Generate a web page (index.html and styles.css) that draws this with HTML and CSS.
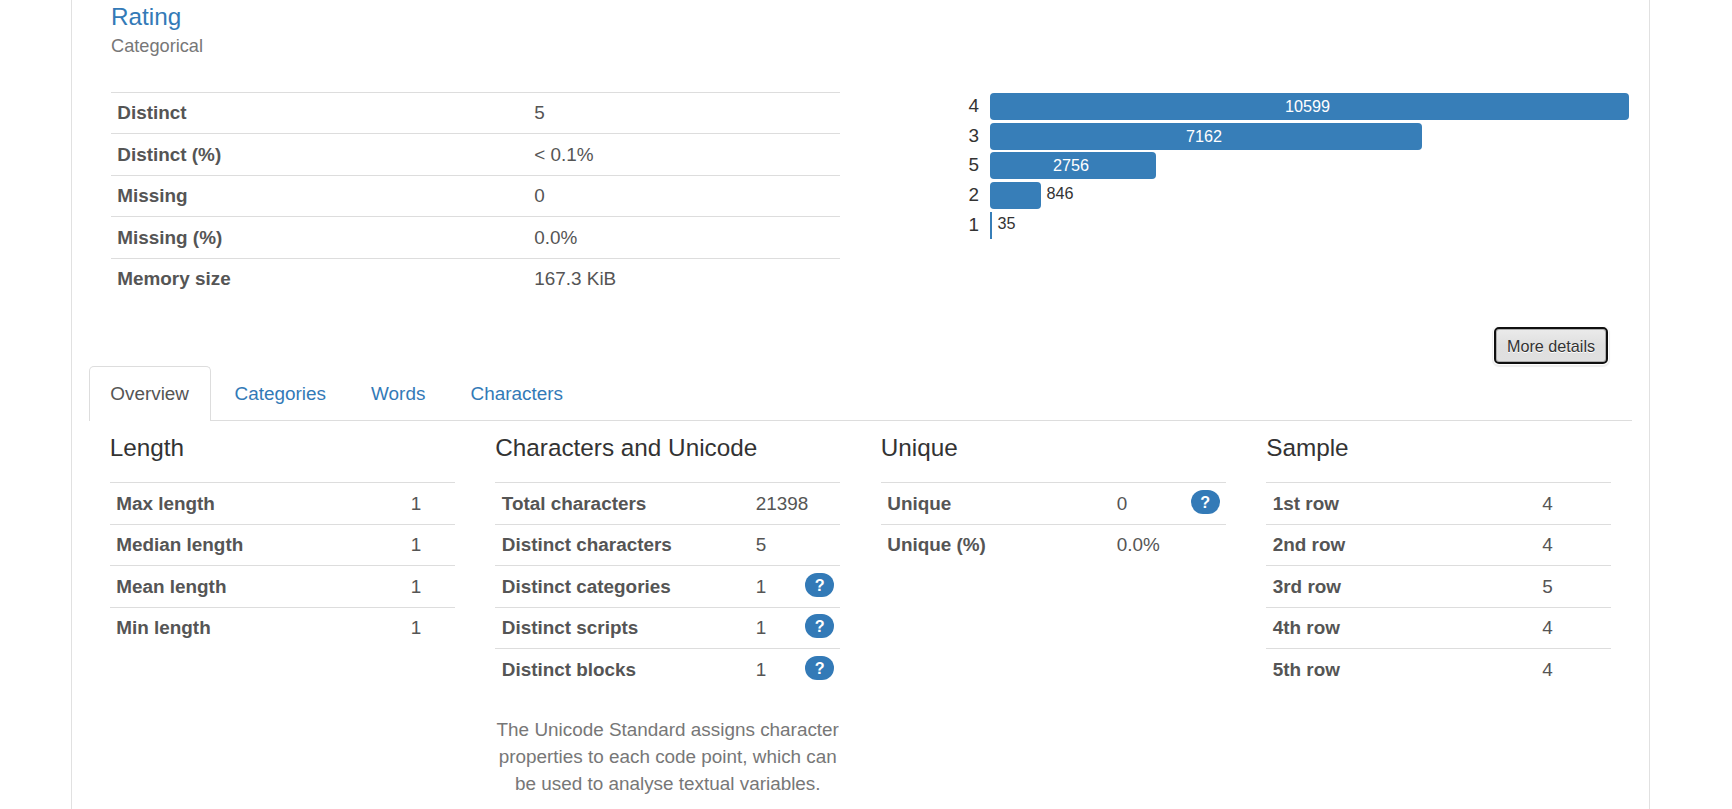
FILE: index.html
```html
<!DOCTYPE html>
<html lang="en">
<head>
<meta charset="utf-8">
<title>Rating</title>
<link rel="stylesheet" href="styles.css">
</head>
<body>
<main class="panel">
  <header class="variable-head">
    <h3 class="variable-name"><a href="#rating">Rating</a></h3>
    <p class="variable-type">Categorical</p>
  </header>

  <section class="summary">
    <dl class="stats stats-summary">
      <div class="row"><dt>Distinct</dt><dd>5</dd></div>
      <div class="row"><dt>Distinct (%)</dt><dd>&lt; 0.1%</dd></div>
      <div class="row"><dt>Missing</dt><dd>0</dd></div>
      <div class="row"><dt>Missing (%)</dt><dd>0.0%</dd></div>
      <div class="row"><dt>Memory size</dt><dd>167.3 KiB</dd></div>
    </dl>
    <div class="chart">
      <div class="bar-row"><span class="bar-label">4</span><div class="bar" style="width:639px">10599</div></div>
      <div class="bar-row"><span class="bar-label">3</span><div class="bar" style="width:432px">7162</div></div>
      <div class="bar-row"><span class="bar-label">5</span><div class="bar" style="width:166px">2756</div></div>
      <div class="bar-row"><span class="bar-label">2</span><div class="bar" style="width:51px"></div><span class="bar-value">846</span></div>
      <div class="bar-row"><span class="bar-label">1</span><div class="bar" style="width:2px"></div><span class="bar-value">35</span></div>
    </div>
  </section>

  <div class="actions"><button class="toggle" type="button">More details</button></div>

  <nav class="tabs">
    <a class="tab active" href="#overview">Overview</a>
    <a class="tab" href="#categories">Categories</a>
    <a class="tab" href="#words">Words</a>
    <a class="tab" href="#characters">Characters</a>
  </nav>

  <section class="columns">
    <div class="column">
      <h4>Length</h4>
      <dl class="stats stats-length">
        <div class="row"><dt>Max length</dt><dd>1</dd></div>
        <div class="row"><dt>Median length</dt><dd>1</dd></div>
        <div class="row"><dt>Mean length</dt><dd>1</dd></div>
        <div class="row"><dt>Min length</dt><dd>1</dd></div>
      </dl>
    </div>
    <div class="column">
      <h4>Characters and Unicode</h4>
      <dl class="stats stats-unicode">
        <div class="row"><dt>Total characters</dt><dd>21398</dd></div>
        <div class="row"><dt>Distinct characters</dt><dd>5</dd></div>
        <div class="row"><dt>Distinct categories</dt><dd>1<span class="badge">?</span></dd></div>
        <div class="row"><dt>Distinct scripts</dt><dd>1<span class="badge">?</span></dd></div>
        <div class="row"><dt>Distinct blocks</dt><dd>1<span class="badge">?</span></dd></div>
      </dl>
      <p class="note">The Unicode Standard assigns character properties to each code point, which can be used to analyse textual variables.</p>
    </div>
    <div class="column">
      <h4>Unique</h4>
      <dl class="stats stats-unique">
        <div class="row"><dt>Unique</dt><dd>0<span class="badge">?</span></dd></div>
        <div class="row"><dt>Unique (%)</dt><dd>0.0%</dd></div>
      </dl>
    </div>
    <div class="column">
      <h4>Sample</h4>
      <dl class="stats stats-sample">
        <div class="row"><dt>1st row</dt><dd>4</dd></div>
        <div class="row"><dt>2nd row</dt><dd>4</dd></div>
        <div class="row"><dt>3rd row</dt><dd>5</dd></div>
        <div class="row"><dt>4th row</dt><dd>4</dd></div>
        <div class="row"><dt>5th row</dt><dd>4</dd></div>
      </dl>
    </div>
  </section>
</main>
</body>
</html>
```
FILE: styles.css
```css
* { box-sizing: border-box; }

body {
  margin: 0;
  height: 809px;
  overflow: hidden;
  background: #fff;
  color: #333;
  font: 18.9px/27px "Liberation Sans", Arial, sans-serif;
}

h3, h4, p, dl, dd { margin: 0; font-weight: 400; }
a { color: #337ab7; text-decoration: none; }

.panel {
  width: 1579px;
  height: 809px;
  margin-left: 71px;
  padding: 0 17px;
  border: solid #e1e1e1;
  border-width: 0 1px;
}

.variable-head { height: 91.9px; padding: 3px 0 0 22px; }
.variable-name { font-size: 24.3px; line-height: 27px; }
.variable-type { color: #777; font-size: 18.2px; line-height: 32px; }

.summary {
  display: flex;
  justify-content: space-between;
  height: 236.1px;
  padding: 0 3px 0 22px;
}

.row {
  display: grid;
  grid-template-columns: var(--label) 1fr;
  height: 41.5px;
  padding: 6.5px 0 0 6.5px;
  border-top: 1px solid #ddd;
  color: #555;
}
.row dt { font-weight: 700; }
.row dd { display: flex; justify-content: space-between; }

.stats-summary { width: 729px; --label: 417px; }
.stats-summary .row { padding: 6.1px 0 0 6.3px; }
.stats-summary .row:nth-child(even) { padding-top: 6.7px; }
.stats-length { --label: 294.5px; }
.stats-unicode { --label: 254px; }
.stats-unique { --label: 229.5px; }
.stats-sample { --label: 269.5px; }

.badge {
  width: 29px;
  height: 24px;
  margin: .4px 6px 0 0;
  border-radius: 13.5px;
  background: #337ab7;
  color: #fff;
  font-size: 16.2px;
  font-weight: 700;
  line-height: 24px;
  text-align: center;
}

.chart { width: 662px; padding-top: 1.1px; }
.bar-row { display: flex; height: 29.7px; }
.bar-label { width: 23px; padding-left: 1.5px; line-height: 26.7px; }
.bar {
  height: 27px;
  padding-right: 4px;
  border-radius: 4px;
  background: #377eb8;
  color: #fff;
  font-size: 16.2px;
  line-height: 27px;
  text-align: center;
}
.bar:not(:last-child) { padding: 0; }
.bar[style="width:2px"] { border-radius: 0; }
.bar-value { margin-left: 5.5px; font-size: 16.2px; line-height: 23px; }

.actions { display: flex; justify-content: flex-end; height: 38px; padding-right: 24px; }
.toggle {
  width: 114px;
  height: 37px;
  margin-top: -.5px;
  padding: 0;
  border: 2px solid #101010;
  border-radius: 5px;
  background: linear-gradient(#ebebeb, #dfdfdf 50%, #e0e0e0);
  box-shadow: inset 0 0 0 1px #adadad, 0 0 0 1px #fff, 0 1px 1px 2px #eee;
  color: #333;
  font: 16.2px/30px "Liberation Sans", Arial, sans-serif;
  text-shadow: 0 1px 0 #fff;
}

.tabs {
  display: flex;
  gap: 2.3px;
  width: 1543px;
  height: 55px;
  border-bottom: 1px solid #ddd;
}
.tab {
  height: 55px;
  padding: 13.5px 20.25px 0;
  border: 1px solid transparent;
  border-bottom: 0;
  border-radius: 5px 5px 0 0;
}
.tab:not(.active) + .tab { margin-left: .4px; }
.tab.active { width: 122px; border-color: #ddd; background: #fff; color: #555; }

.columns { display: grid; grid-template-columns: repeat(4, 385.5px); padding-left: .5px; }
.column { padding: 13.5px 20.25px 0; }
.column h4 { height: 47.6px; font-size: 24.3px; line-height: 27px; }
.note { margin-top: 26.2px; color: #777; text-align: center; }
```
